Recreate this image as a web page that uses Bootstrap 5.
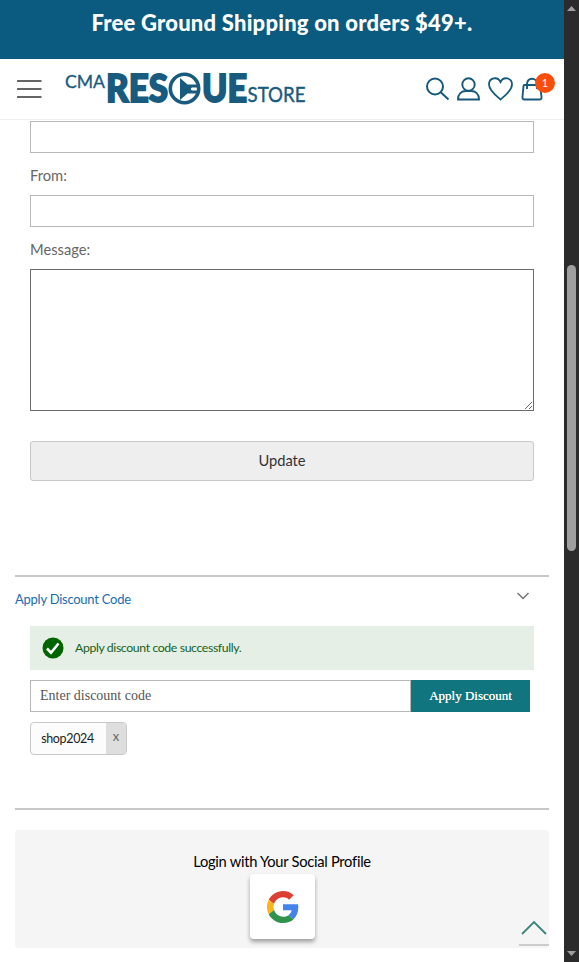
<!DOCTYPE html>
<html lang="en">
<head>
    <meta charset="UTF-8">
    <meta name="viewport" content="width=device-width, initial-scale=1.0">
    <title>CMA Rescue Store</title>
    <link href="https://cdn.jsdelivr.net/npm/bootstrap@5.3.0/dist/css/bootstrap.min.css" rel="stylesheet">
    <style>
        body { font-family: Lato, sans-serif; color: #111; font-size: 14px; }
        .page { height: 962px; }
        .promo { height: 59px; background: #0b5a80; padding-top: 8px; font-size: 22px; font-weight: 900; line-height: 30px; }
        .promo span { letter-spacing: .22px; }
        .site-header { height: 61px; border-bottom: 1px solid #eee; padding: 0 17px; }
        .site-header svg { display: block; flex: none; }
        .logo { margin-left: 21px; }
        .tools { gap: 6px; margin-left: 112px; }
        .cart-count { top: -4px; left: 15px; width: 20px; height: 20px; background: #fa4d09; font-size: 11px; line-height: 20px; }
        .box { border: 1px solid #b8b8b8; border-radius: 0; height: 32px; min-height: 32px; padding: 0 9px; font-size: 14px; }
        .gift { padding: 1px 30px 0; }
        .gift label { display: block; height: 42px; line-height: 45px; font-size: 14.7px; color: #666; }
        .gift textarea.box { height: 142px; border-color: #6c6c6c; resize: vertical; }
        .btn-update { height: 40px; margin-top: 30px; background: #eee; border: 1px solid #c8c8c8; border-radius: 3px; font-size: 14.7px; line-height: 36px; padding: 0 0 2px; color: #333; }
        .rule { height: 2px; background: #c8c8c8; margin: 0 15px; }
        .discount-title { height: 49px; padding: 0 20px 3px 15px; color: #1b6cae; font-size: 13px; letter-spacing: -.25px; }
        .discount-title svg { margin: 0 15px 8px 0; }
        .discount-body { margin: 0 30px; }
        .msg-ok { height: 44px; margin-bottom: 10px; padding: 0 11px 0 12px; gap: 11px; background: #e5efe5; color: #185f18; font-size: 12.3px; letter-spacing: -.39px; }
        .msg-ok span { padding-top: 1px; }
        .code-row { margin-right: 4px; font-family: "Liberation Serif", serif; }
        .code-row .box { color: #555; }
        .code-row .box::placeholder { color: #555; opacity: 1; }
        .btn-apply { width: 119px; background: #10757f; color: #fff; border: 0; border-radius: 0; font-size: 13px; padding: 0; text-shadow: 0 0 .5px #fff; }
        .btn-apply:hover { background: #0c6068; color: #fff; }
        .coupon { margin-top: 10px; height: 33px; width: 97px; border: 1px solid #c8c8c8; border-radius: 4px; background: #fcfcfc; overflow: hidden; font-size: 12.5px; letter-spacing: -.35px; color: #222; }
        .coupon span { padding: 2px 2px 0 0; }
        .coupon button { width: 20px; border: 0; background: #dedede; color: #666; padding: 0 0 3px; font-size: 13px; }
        .social { height: 118px; margin: 20px 15px 0; background: #f5f5f5; border-radius: 4px; padding-top: 19px; color: #000; }
        .social p { font-size: 14.7px; letter-spacing: -.27px; line-height: 25px; margin: 0; }
        .google { width: 65px; height: 65px; background: #fff; border-radius: 4px; box-shadow: 0 3px 4px rgba(0,0,0,.35); }
        .google svg { margin-left: 1px; }
        .to-top { right: 0; bottom: 2px; width: 30px; height: 30px; border-bottom: 2px solid #ccc; }
        .scroller { width: 15px; background: #2b2b2b; padding: 6px 0; }
        .scroller i { width: 9px; height: 286px; margin-top: 254px; border-radius: 5px; background: #9f9f9f; }
    </style>
</head>
<body class="bg-white overflow-hidden">
    <div class="page d-flex">
        <main class="flex-grow-1">
            <div class="promo text-white text-center"><span>Free Ground Shipping on orders $49+.</span></div>

            <!-- Header -->
            <header class="site-header d-flex align-items-center">
                <svg width="25" height="20" viewBox="0 0 25 20" stroke="#666" stroke-width="2"><path d="M0 2h24.500M0 10h24.500M0 18h24.500"/></svg>
                <svg class="logo" width="250" height="56" viewBox="-2 -10 250 56" fill="#195b7e" font-family="Lato">
                    <text x="0" y="16.500" font-size="17" textLength="40" lengthAdjust="spacingAndGlyphs" stroke="#195b7e" stroke-width=".3">CMA</text>
                    <g font-size="37" font-weight="900" stroke="#195b7e" stroke-width="1.800">
                        <text x="41" y="31" textLength="62" lengthAdjust="spacingAndGlyphs">RES</text>
                        <text x="137" y="31" textLength="45" lengthAdjust="spacingAndGlyphs">UE</text>
                    </g>
                    <circle cx="119.500" cy="17.500" r="14.200" fill="#fff" stroke="#195b7e" stroke-width="3.600"/>
                    <path d="M115 7l7.500 6.500H132v3h-5q-2.500 1.500 0 3h5v3h-9.500L115 29z"/>
                    <text x="182.500" y="31" font-size="21" textLength="58" lengthAdjust="spacingAndGlyphs" stroke="#195b7e" stroke-width=".4">STORE</text>
                </svg>
                <div class="tools d-flex">
                    <svg width="25" height="24" fill="none" stroke="#16597a" stroke-width="2"><circle cx="10" cy="9.500" r="8"/><path d="M16 15.500l7.500 7"/></svg>
                    <svg width="25" height="24" fill="none" stroke="#16597a" stroke-width="1.900"><circle cx="12.500" cy="7.500" r="6.200"/><path d="M2 22.500c0-5.500 3.500-8.500 8-8.500h5c4.500 0 8 3 8 8.500z"/></svg>
                    <svg width="27" height="24" fill="none" stroke="#16597a" stroke-width="1.800"><path d="M13.500 22.500C10.500 20 2 13.500 2 7.500c0-6.800 8.500-8.500 11.500-2.500 3-6 11.500-4.300 11.500 2.500C25 13.500 16.500 20 13.500 22.500z"/></svg>
                    <div class="position-relative">
                        <svg width="24" height="24" fill="none" stroke="#16597a" stroke-width="1.900"><path d="M4.500 8H20l1.500 12q.2 2.500-2 2.500H4.500q-2.200 0-2-2.500l1-11q0-1 1-1zM7 12V7C7 0 17 0 17 7v5"/></svg>
                        <span class="cart-count position-absolute rounded-circle text-white text-center">1</span>
                    </div>
                </div>
            </header>

            <!-- Gift message form -->
            <form class="gift">
                <input type="text" class="box form-control" aria-label="To">
                <label for="from">From:</label>
                <input type="text" id="from" class="box form-control">
                <label for="message">Message:</label>
                <textarea id="message" class="box form-control"></textarea>
                <button type="button" class="btn btn-update d-block w-100">Update</button>
            </form>

            <!-- Discount code -->
            <div class="rule" style="margin-top: 94px"></div>
            <div class="discount-title d-flex align-items-center justify-content-between">
                <span>Apply Discount Code</span>
                <svg width="12" height="8" viewBox="0 0 12 8" fill="none" stroke="#757575" stroke-width="1.500"><path d="M.5 1L6 6.500 11.500 1"/></svg>
            </div>
            <div class="discount-body">
                <div class="msg-ok d-flex align-items-center">
                    <svg width="22" height="22" viewBox="0 0 22 22"><circle cx="11" cy="11" r="10.500" fill="#006400"/><path d="M5 11.500l4 4.200 7.500-9.200" fill="none" stroke="#fff" stroke-width="2.600"/></svg>
                    <span>Apply discount code successfully.</span>
                </div>
                <div class="code-row d-flex">
                    <input type="text" class="box form-control flex-grow-1" placeholder="Enter discount code">
                    <button type="button" class="btn btn-apply flex-shrink-0">Apply Discount</button>
                </div>
                <div class="coupon d-flex">
                    <span class="flex-grow-1 d-flex align-items-center justify-content-center">shop2024</span>
                    <button type="button">x</button>
                </div>
            </div>

            <!-- Social login -->
            <div class="rule" style="margin-top: 53px"></div>
            <section class="social position-relative text-center">
                <p>Login with Your Social Profile</p>
                <a href="#" class="google d-flex align-items-center justify-content-center mx-auto" aria-label="Google">
                    <svg width="32" height="32" viewBox="0 0 48 48">
                        <path fill="#dc4035" d="M24 9.500c3.540 0 6.710 1.220 9.210 3.600l6.850-6.850C35.900 2.380 30.470 0 24 0 14.620 0 6.510 5.380 2.560 13.220l7.980 6.190C12.430 13.720 17.740 9.500 24 9.500z"/>
                        <path fill="#4482ee" d="M46.980 24.550c0-1.570-.15-3.090-.38-4.550H24v9.020h12.940c-.58 2.960-2.260 5.480-4.780 7.180l7.730 6c4.510-4.180 7.090-10.360 7.090-17.650z"/>
                        <path fill="#f6b61c" d="M10.530 28.590a14.500 14.500 0 0 1 0-9.180l-7.980-6.190a24 24 0 0 0 0 21.560z"/>
                        <path fill="#30934c" d="M24 48c6.480 0 11.930-2.130 15.890-5.810l-7.730-6c-2.150 1.450-4.920 2.300-8.160 2.300-6.260 0-11.570-4.220-13.470-9.910l-7.980 6.190C6.510 42.620 14.620 48 24 48z"/>
                    </svg>
                </a>
                <a href="#" class="to-top position-absolute" aria-label="Back to top">
                    <svg class="d-block mx-auto" width="26" height="20" fill="none" stroke="#3c837b" stroke-width="1.800"><path d="M1 18L13 6l12 12"/></svg>
                </a>
            </section>
        </main>

        <!-- Scrollbar -->
        <div class="scroller d-flex flex-column align-items-center">
            <svg width="9" height="5" fill="#9f9f9f"><path d="M0 5L4.500 0 9 5z"/></svg>
            <i></i>
            <svg class="mt-auto" width="9" height="5" fill="#9f9f9f"><path d="M0 0h9L4.500 5z"/></svg>
        </div>
    </div>
</body>
</html>
